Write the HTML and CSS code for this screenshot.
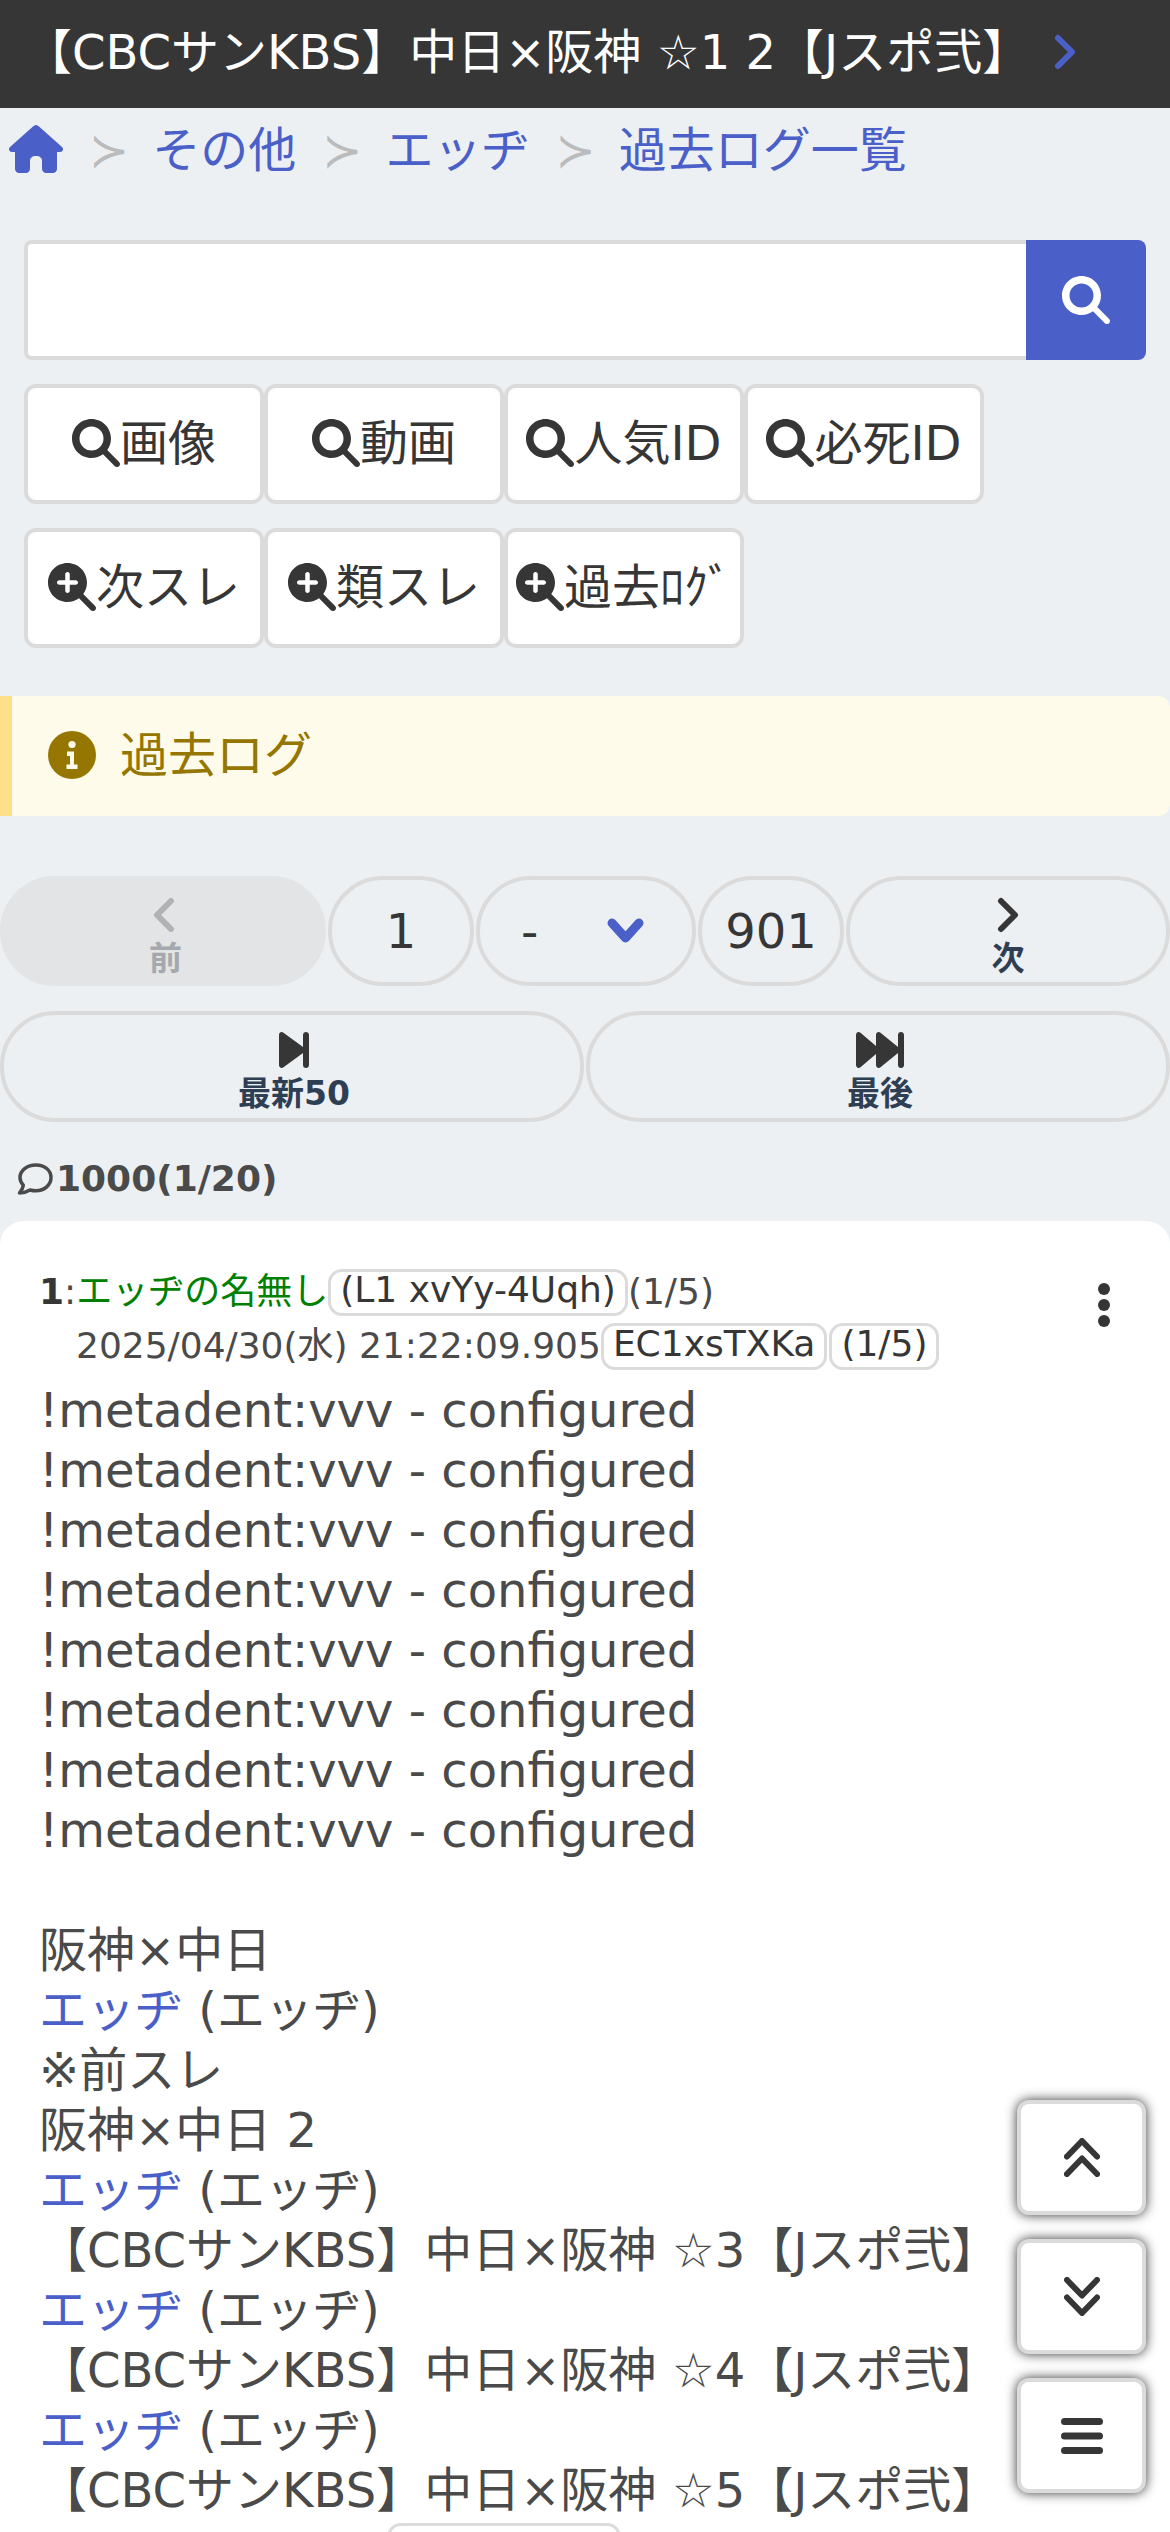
FILE: index.html
```html
<!DOCTYPE html>
<html lang="ja">
<head>
<meta charset="utf-8">
<title>過去ログ</title>
<link rel="stylesheet" href="styles.css">
</head>
<body>
<svg class="defs" width="0" height="0" aria-hidden="true">
  <symbol id="mag" viewBox="0 0 512 512"><path d="M416 208c0 45.900-14.900 88.300-40 122.700L502.600 457.400c12.500 12.500 12.500 32.800 0 45.300s-32.800 12.500-45.300 0L330.700 376c-34.400 25.200-76.800 40-122.700 40C93.100 416 0 322.900 0 208S93.100 0 208 0S416 93.100 416 208zM208 336a128 128 0 1 0 0-256 128 128 0 1 0 0 256z"/></symbol>
  <symbol id="magplus" viewBox="0 0 512 512"><path d="M416 208c0 45.900-14.900 88.300-40 122.700L502.600 457.400c12.500 12.500 12.500 32.800 0 45.300s-32.800 12.500-45.300 0L330.700 376c-34.400 25.200-76.800 40-122.700 40C93.100 416 0 322.900 0 208S93.100 0 208 0S416 93.100 416 208zM184 296c0 13.300 10.700 24 24 24s24-10.700 24-24V232h64c13.300 0 24-10.700 24-24s-10.700-24-24-24H232V120c0-13.300-10.700-24-24-24s-24 10.700-24 24v64H120c-13.300 0-24 10.700-24 24s10.700 24 24 24h64v64z"/></symbol>
</svg>
<header class="topbar">
  <span class="topbar-title">【CBCサンKBS】中日×阪神 ☆1 2【Jスポ弐】</span>
  <svg class="topbar-chev" viewBox="0 0 22 36"><path d="M4 4l14 14L4 32" fill="none" stroke="currentColor" stroke-width="6" stroke-linecap="round" stroke-linejoin="round"/></svg>
</header>
<nav class="crumbs">
  <svg class="home" viewBox="0 0 54 48"><path d="M27 0C28 0 29 .5 30 1.500L53 22C55 24 54 27 51 27H48V44C48 46 46 48 44 48H37C35 48 33 46 33 44V36C33 33 31 31 27 31C23 31 21 33 21 36V44C21 46 19 48 17 48H10C8 48 6 46 6 44V27H3C0 27-1 24 1 22L24 1.500C25 .5 26 0 27 0Z"/></svg>
  <span class="sep">≻</span><a class="crumb">その他</a>
  <span class="sep">≻</span><a class="crumb">エッヂ</a>
  <span class="sep">≻</span><a class="crumb">過去ログ一覧</a>
</nav>
<form class="search">
  <div class="search-input"></div>
  <div class="search-btn"><svg class="search-ic"><use href="#mag"/></svg></div>
</form>
<div class="tools">
  <a class="tool"><svg class="tool-ic"><use href="#mag"/></svg>画像</a>
  <a class="tool"><svg class="tool-ic"><use href="#mag"/></svg>動画</a>
  <a class="tool"><svg class="tool-ic"><use href="#mag"/></svg>人気ID</a>
  <a class="tool"><svg class="tool-ic"><use href="#mag"/></svg>必死ID</a>
</div>
<div class="tools tools-second">
  <a class="tool"><svg class="tool-ic"><use href="#magplus"/></svg>次スレ</a>
  <a class="tool"><svg class="tool-ic"><use href="#magplus"/></svg>類スレ</a>
  <a class="tool"><svg class="tool-ic"><use href="#magplus"/></svg>過去ﾛｸﾞ</a>
</div>
<div class="notice">
  <svg class="notice-ic" viewBox="0 0 48 48"><circle cx="24" cy="24" r="24"/><circle cx="24" cy="13.500" r="3.600" fill="#fffbeb"/><path d="M19 20.500h7v13h3.500v4.500h-11v-4.500H22v-8.500h-3z" fill="#fffbeb"/></svg>
  <span>過去ログ</span>
</div>
<div class="pager">
  <a class="pill pill-side disabled">
    <svg class="pill-chev" viewBox="0 0 22 36"><path d="M18 4L4 18l14 14" fill="none" stroke="currentColor" stroke-width="6" stroke-linecap="round" stroke-linejoin="round"/></svg>
    <span class="pill-label">前</span>
  </a>
  <a class="pill pill-num">1</a>
  <a class="pill pill-select"><span>-</span>
    <svg class="select-chev" viewBox="0 0 37 25"><path d="M5 5l13.500 15L32 5" fill="none" stroke="currentColor" stroke-width="9" stroke-linecap="round" stroke-linejoin="round"/></svg>
  </a>
  <a class="pill pill-num">901</a>
  <a class="pill pill-side">
    <svg class="pill-chev" viewBox="0 0 22 36"><path d="M4 4l14 14L4 32" fill="none" stroke="currentColor" stroke-width="6" stroke-linecap="round" stroke-linejoin="round"/></svg>
    <span class="pill-label">次</span>
  </a>
</div>
<div class="pager pager-second">
  <a class="pill pill-wide">
    <svg class="skip-ic" viewBox="0 0 30 36"><path d="M0 3v30c0 2.500 2.500 3.800 4.500 2.200L24 21v12c0 1.700 1.300 3 3 3s3-1.300 3-3V3c0-1.700-1.300-3-3-3s-3 1.300-3 3v12L4.500.8C2.500-.8 0 .5 0 3z"/></svg>
    <span class="pill-label">最新50</span>
  </a>
  <a class="pill pill-wide">
    <svg class="skip-ic skip-ic-double" viewBox="0 0 48 36"><path d="M0 3v30c0 2.500 2.500 3.800 4.500 2.200L20 22v11c0 2.500 2.500 3.800 4.500 2.200L42 21v12c0 1.700 1.300 3 3 3s3-1.300 3-3V3c0-1.700-1.300-3-3-3s-3 1.300-3 3v12L24.500.8C22.500-.8 20 .5 20 3v11L4.500.8C2.500-.8 0 .5 0 3z"/></svg>
    <span class="pill-label">最後</span>
  </a>
</div>
<div class="count">
  <svg class="count-ic" viewBox="0 0 36 32"><path d="M19 2C10 2 3 7.500 3 14.500c0 3 1.300 5.500 3.300 7.700C6 25 4.500 27.500 2.500 30c4 0 7.500-1.200 10.500-3 2 .5 4 .8 6 .8 8.500 0 15-6 15-13.300S27.500 2 19 2z" fill="none" stroke="currentColor" stroke-width="3.500" stroke-linejoin="round"/></svg><span>1000(1/20)</span>
</div>
<main class="card">
  <div class="post-head">
    <div class="meta-line"><b class="num">1</b><span class="colon">:</span><span class="name">エッヂの名無し</span><span class="tag">(L1 xvYy-4Uqh)</span><span class="frac">(1/5)</span></div>
    <div class="meta-line meta-second"><span>2025/04/30(水) 21:22:09.905</span><span class="tag">EC1xsTXKa</span><span class="tag">(1/5)</span></div>
    <svg class="kebab" viewBox="0 0 14 46"><circle cx="7" cy="7" r="6"/><circle cx="7" cy="23" r="6"/><circle cx="7" cy="39" r="6"/></svg>
  </div>
  <div class="post-body">
    <div>!metadent:vvv - configured</div>
    <div>!metadent:vvv - configured</div>
    <div>!metadent:vvv - configured</div>
    <div>!metadent:vvv - configured</div>
    <div>!metadent:vvv - configured</div>
    <div>!metadent:vvv - configured</div>
    <div>!metadent:vvv - configured</div>
    <div>!metadent:vvv - configured</div>
    <div>&nbsp;</div>
    <div>阪神×中日</div>
    <div><a class="link">エッヂ</a> (エッヂ)</div>
    <div>※前スレ</div>
    <div>阪神×中日 2</div>
    <div><a class="link">エッヂ</a> (エッヂ)</div>
    <div>【CBCサンKBS】中日×阪神 ☆3【Jスポ弐】</div>
    <div><a class="link">エッヂ</a> (エッヂ)</div>
    <div>【CBCサンKBS】中日×阪神 ☆4【Jスポ弐】</div>
    <div><a class="link">エッヂ</a> (エッヂ)</div>
    <div>【CBCサンKBS】中日×阪神 ☆5【Jスポ弐】</div>
  </div>
  <div class="cut-tag"></div>
</main>
<div class="float-btns">
  <a class="float-btn"><svg viewBox="0 0 36 39" class="float-ic"><path d="M3 18.500L18 3l15 15.500M3 36l15-15.500L33 36" fill="none" stroke="currentColor" stroke-width="6" stroke-linecap="round" stroke-linejoin="round"/></svg></a>
  <a class="float-btn"><svg viewBox="0 0 36 39" class="float-ic"><path d="M3 3l15 15.500L33 3M3 20.500L18 36l15-15.500" fill="none" stroke="currentColor" stroke-width="6" stroke-linecap="round" stroke-linejoin="round"/></svg></a>
  <a class="float-btn"><svg viewBox="0 0 42 36" class="float-ic float-ic-bars"><path d="M3.500 3.500h35M3.500 18h35M3.500 32.500h35" fill="none" stroke="currentColor" stroke-width="7" stroke-linecap="round"/></svg></a>
</div>
</body>
</html>
```
FILE: styles.css
```css
* { box-sizing: border-box; }
html, body { margin: 0; padding: 0; }
body {
  width: 1170px;
  height: 2532px;
  overflow: hidden;
  position: relative;
  background: #ecf0f3;
  color: #4a4a4a;
  font-family: "DejaVu Sans", "Noto Sans CJK JP", sans-serif;
  font-size: 48px;
  line-height: 60px;
}
.defs { position: absolute; }
.topbar {
  height: 108px;
  background: #363636;
  color: #fff;
  display: flex;
  align-items: center;
  padding: 0 0 4px 24px;
  white-space: nowrap;
}
.topbar-chev { width: 22px; height: 36px; color: #4a5fc8; margin-left: 24px; flex: none; }
.crumbs {
  height: 84px;
  display: flex;
  align-items: center;
  padding-left: 9px;
  color: #4a5fc8;
}
.home { width: 54px; height: 48px; fill: #4a5fc8; margin-top: -2px; flex: none; }
.sep { color: #bbb; margin: 0 23px 0 26px; }
.crumb { color: #4a5fc8; }
.search {
  display: flex;
  margin: 48px 24px 0;
  height: 120px;
}
.search-input {
  flex: 1;
  background: #fff;
  border: 4px solid #dbdbdb;
  border-right: 0;
  border-radius: 8px 0 0 8px;
}
.search-btn {
  width: 120px;
  background: #4a5fc8;
  border-radius: 0 8px 8px 0;
  display: flex;
  align-items: center;
  justify-content: center;
}
.search-ic { width: 48px; height: 48px; fill: #fff; }
.tools { display: flex; margin: 24px 0 0 24px; }
.tool {
  width: 240px;
  height: 120px;
  padding-bottom: 3px;
  background: #fff;
  border: 4px solid #dbdbdb;
  border-radius: 12px;
  display: flex;
  align-items: center;
  justify-content: center;
  color: #363636;
  white-space: nowrap;
}
.tool-ic { width: 48px; height: 48px; fill: #363636; flex: none; }
.notice {
  margin-top: 48px;
  height: 120px;
  padding-bottom: 2px;
  background: #fffbeb;
  border-left: 12px solid #ffe08a;
  border-radius: 0 12px 12px 0;
  display: flex;
  align-items: center;
  padding-left: 36px;
  color: #947600;
}
.notice-ic { width: 48px; height: 48px; fill: #947600; margin-right: 24px; }
.pager { display: flex; margin-top: 60px; gap: 2px; }
.pager-second { margin-top: 25px; }
.pill {
  height: 110px;
  border: 4px solid #dbdbdb;
  border-radius: 55px;
  display: flex;
  flex-direction: column;
  align-items: center;
  color: #363636;
  padding-top: 17px;
}
.pill-side { flex: 1; }
.pill-side.disabled { background: #e2e4e6; border-color: #e2e4e6; color: #b0b2b4; padding-left: 2px; }
.pill-num { width: 146px; padding-top: 21px; }
.pill-select { width: 220px; flex-direction: row; padding: 21px 0 0 41px; align-items: flex-start; }
.select-chev { width: 37px; height: 25px; color: #4a5fc8; margin: 17px 0 0 69px; flex: none; }
.pill-wide { flex: 1; height: 111px; padding-left: 4px; }
.pill-chev { width: 22px; height: 36px; flex: none; }
.pill-label { font-size: 33px; line-height: 34px; font-weight: 700; color: #2f3f53; margin-top: 9px; }
.disabled .pill-label { color: #a5a9ad; margin-left: 3px; }
.skip-ic { width: 30px; height: 36px; fill: #363636; flex: none; }
.skip-ic-double { width: 48px; }
.count {
  display: flex;
  align-items: center;
  margin: 33px 0 0 17px;
  font-size: 36px;
  line-height: 48px;
  font-weight: 700;
}
.count-ic { width: 36px; height: 32px; flex: none; margin-right: 3px; }
.card {
  margin-top: 18px;
  background: #fff;
  border-radius: 24px 24px 0 0;
  padding: 44px 0 0 39px;
}
.post-head { position: relative; font-size: 36px; line-height: 48px; }
.meta-line { display: flex; align-items: center; white-space: nowrap; height: 54px; }
.meta-second { padding-left: 37px; gap: 2px; }
.meta-second span:first-child { margin-right: -2px; }
.num { color: #363636; }
.name { color: green; }
.tag {
  border: 3px solid #dbdbdb;
  border-radius: 14px;
  padding: 0 9px;
  height: 47px;
  line-height: 36px;
  color: #363636;
}
.kebab { position: absolute; right: 59px; top: 17px; width: 14px; height: 46px; fill: #363636; }
.post-body { white-space: nowrap; margin-top: 7px; }
.cut-tag {
  margin: 3px 0 0 348px;
  width: 234px;
  height: 47px;
  border: 3px solid #dbdbdb;
  border-radius: 14px;
}
.link { color: #4a5fc8; }
.float-btns {
  position: absolute;
  right: 24px;
  top: 2100px;
  display: flex;
  flex-direction: column;
  gap: 24px;
}
.float-btn {
  width: 129px;
  height: 115px;
  background: #fff;
  border: 4px solid #dbdbdb;
  border-radius: 12px;
  box-shadow: 0 0 12px rgba(0,0,0,.8);
  display: flex;
  align-items: center;
  justify-content: center;
  color: #363636;
}
.float-ic { width: 36px; height: 39px; }
.float-ic-bars { width: 42px; height: 36px; }
```
